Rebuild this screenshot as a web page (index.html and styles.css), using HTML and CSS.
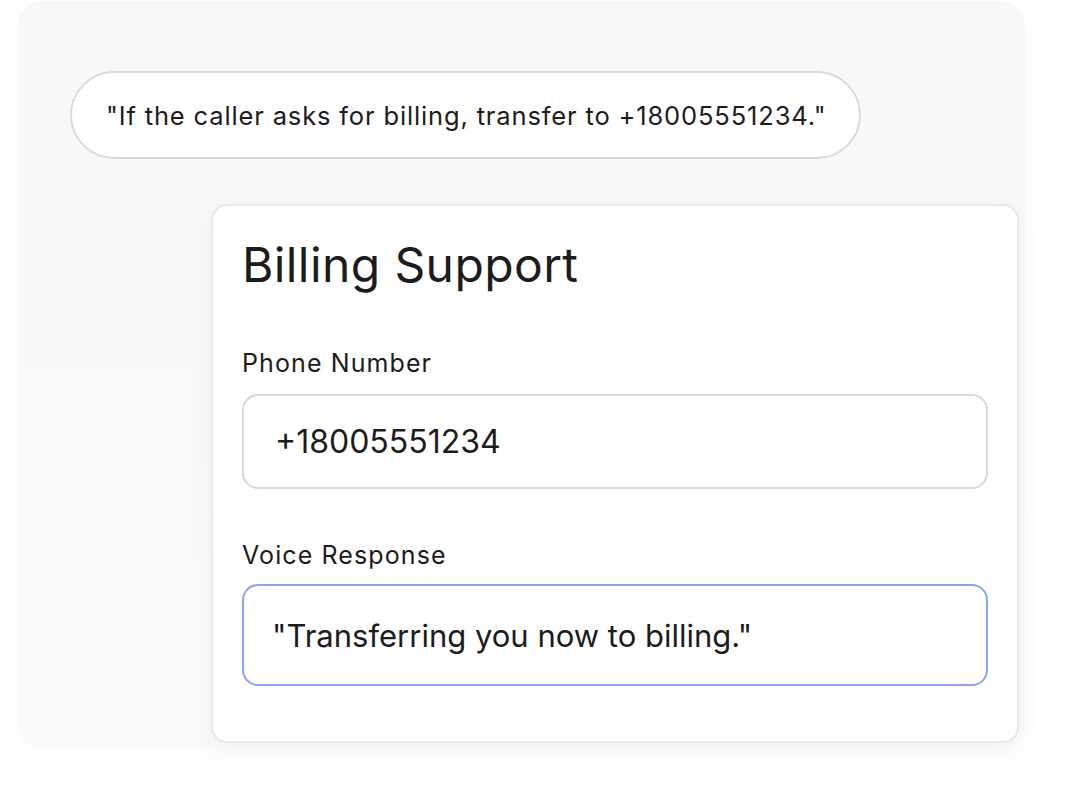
FILE: index.html
```html
<!DOCTYPE html>
<html>
<head>
<meta charset="utf-8">
<link rel="stylesheet" href="styles.css">
</head>
<body>
<div class="panel">
  <div class="bubble">"If the caller asks for billing, transfer to +18005551234."</div>
  <div class="card">
    <h1 class="title">Billing Support</h1>
    <div class="field">
      <div class="label">Phone Number</div>
      <div class="input">+18005551234</div>
    </div>
    <div class="field">
      <div class="label">Voice Response</div>
      <div class="input input-focus">"Transferring you now to billing."</div>
    </div>
  </div>
</div>
</body>
</html>
```
FILE: styles.css
```css
html, body {
  margin: 0;
  padding: 0;
  background: #ffffff;
}
body {
  font-family: Inter, "Noto Sans", sans-serif;
  color: #1c1c1c;
  width: 1072px;
  height: 795px;
  overflow: hidden;
}
.panel {
  margin: 1px 0 0 18px;
  width: 1007px;
  height: 747px;
  box-sizing: border-box;
  background: linear-gradient(180deg, #f8f8f8 0%, #fafafa 100%);
  border-radius: 24px;
  padding: 70px 0 0 52px;
  display: flex;
  flex-direction: column;
  align-items: flex-start;
  box-shadow: 0 8px 24px rgba(0,0,0,0.02);
}
.bubble {
  height: 88px;
  box-sizing: border-box;
  border: 2px solid #dadada;
  border-radius: 44px;
  background: #ffffff;
  padding: 0 32px 0 34px;
  display: flex;
  align-items: center;
  font-size: 25.5px;
  letter-spacing: 0.85px;
  white-space: nowrap;
}
.card {
  margin: 45px 0 0 141px;
  width: 808px;
  height: 539px;
  box-sizing: border-box;
  background: #ffffff;
  border: 2px solid #e9e9e9;
  border-radius: 16px;
  padding: 30px 29px 0 29px;
  box-shadow: 0 4px 24px rgba(0,0,0,0.04);
  display: flex;
  flex-direction: column;
}
.title {
  margin: 0;
  font-size: 48px;
  font-weight: 400;
  line-height: 58px;
  letter-spacing: 0.4px;
}
.field {
  display: flex;
  flex-direction: column;
}
.label {
  font-size: 25px;
  line-height: 32px;
  letter-spacing: 1.1px;
  margin-top: 53px;
  margin-bottom: 15px;
}
.field + .field .label {
  margin-top: 50px;
  margin-bottom: 13px;
}
.input {
  height: 95px;
  box-sizing: border-box;
  border: 2px solid #d8d8dc;
  border-radius: 16px;
  padding: 0 31px;
  display: flex;
  align-items: center;
  font-size: 32px;
}
.input-focus {
  height: 102px;
  border-color: #8ca6ec;
  padding-left: 28px;
  font-size: 31px;
}
```
